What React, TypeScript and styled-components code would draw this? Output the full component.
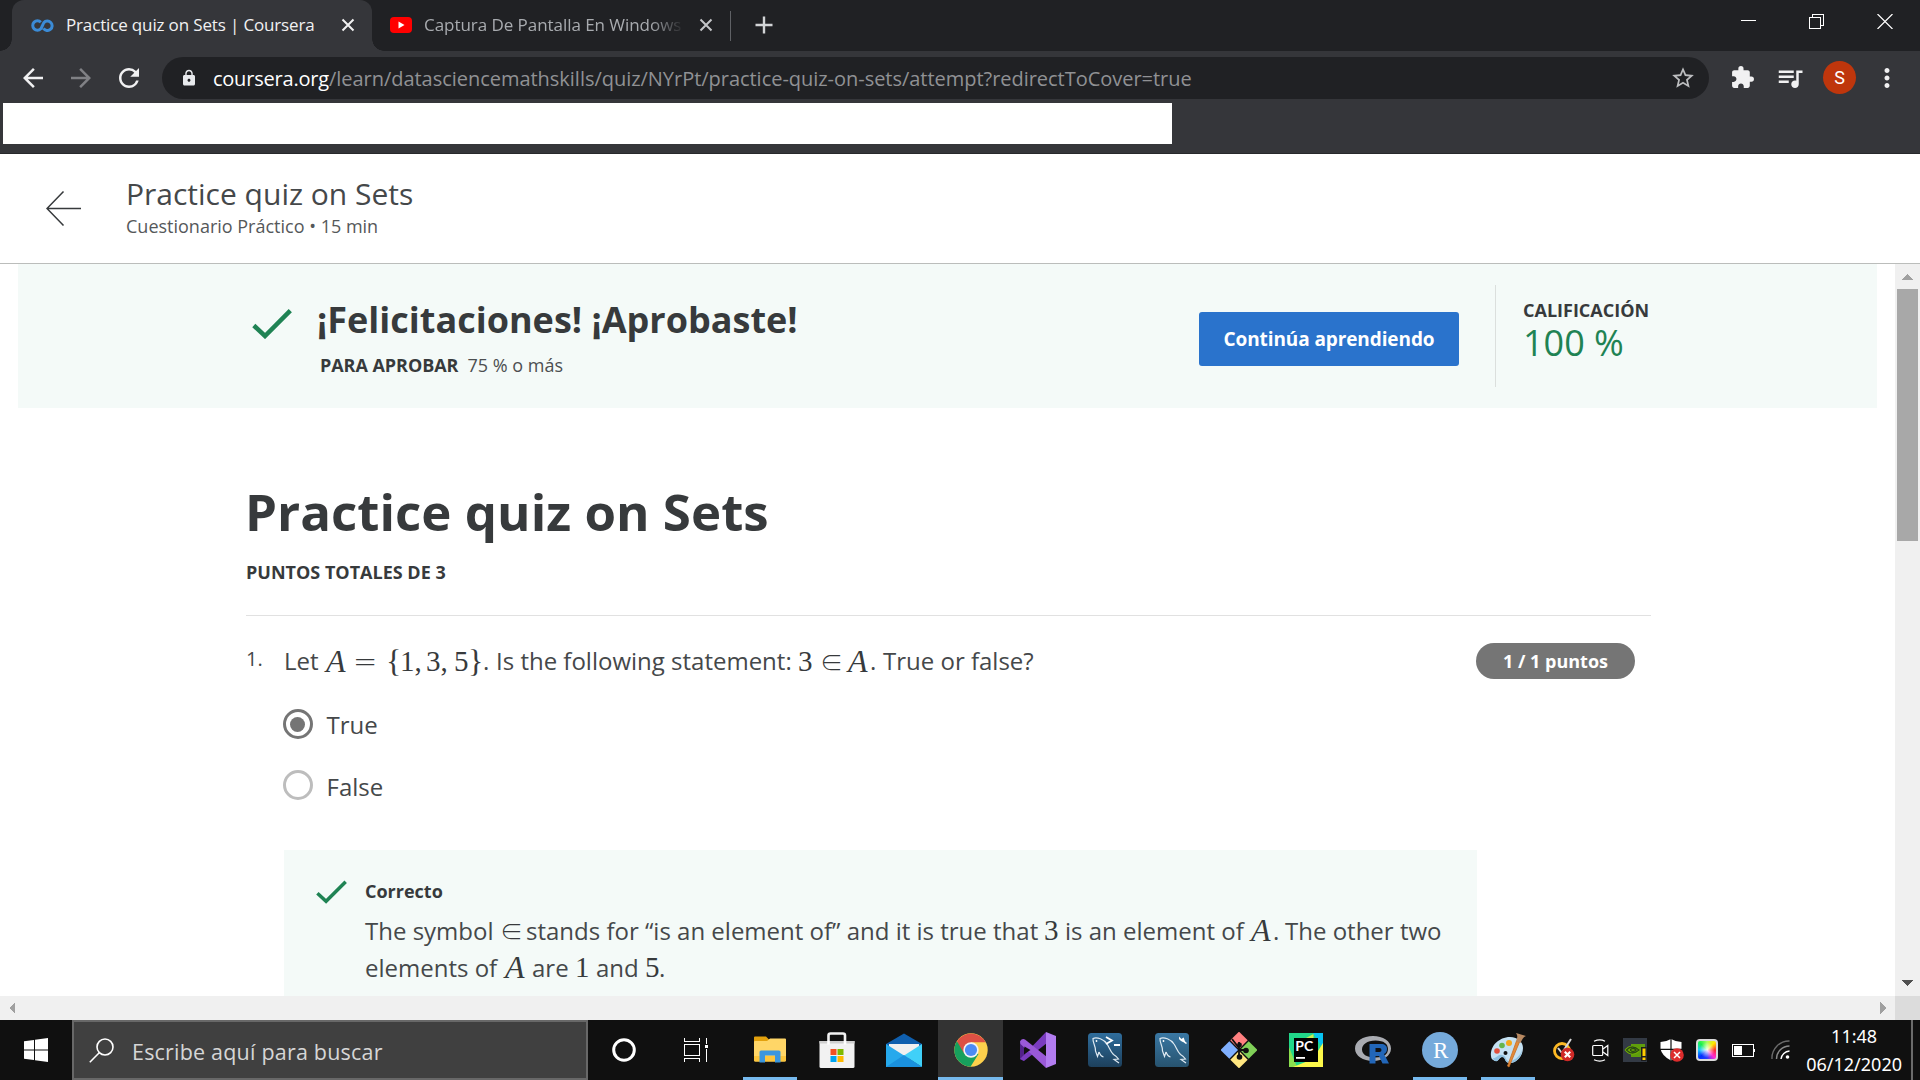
import React from 'react';
import styled, { createGlobalStyle, css } from 'styled-components';
import {
  MdArrowBack,
  MdArrowForward,
  MdRefresh,
  MdLock,
  MdStarBorder,
  MdExtension,
  MdQueueMusic,
  MdMoreVert,
} from 'react-icons/md';

const ui = `"Open Sans", "Noto Sans", sans-serif`;
const winUi = `"Noto Sans", "Open Sans", sans-serif`;

const Global = createGlobalStyle`
  * { box-sizing: border-box; }
  html, body { margin: 0; padding: 0; overflow: hidden; background: #fff; }
  svg { display: block; flex: none; }
`;

const Screen = styled.div`
  width: 1920px;
  height: 1080px;
  display: flex;
  flex-direction: column;
  overflow: hidden;
  font-family: ${ui};
  color: #45484a;
`;

/* ---------- text ---------- */

const Text = styled.span<{ $size: number; $lh: number; $w?: number; $ls?: number; $c?: string; $win?: boolean }>`
  display: block;
  white-space: nowrap;
  font-size: ${(p) => p.$size}px;
  line-height: ${(p) => p.$lh}px;
  font-weight: ${(p) => p.$w ?? 400};
  letter-spacing: ${(p) => p.$ls ?? 0}px;
  color: ${(p) => p.$c ?? (p.$w ? '#373a3c' : '#45484a')};
  ${(p) => p.$win && css`font-family: ${winUi};`}
`;

/* ---------- browser chrome ---------- */

const TabStrip = styled.div`
  height: 51px;
  background: #202124;
  display: flex;
  padding-left: 12px;
  flex: none;
`;

const Tab = styled.div<{ $active?: boolean; $width: number }>`
  position: relative;
  width: ${(p) => p.$width}px;
  height: 51px;
  padding: 0 0 1px 18px;
  display: flex;
  align-items: center;
  gap: 12px;
  ${(p) =>
    p.$active &&
    css`
      background: #35363a;
      border-radius: 12px 12px 0 0;
      &::before,
      &::after {
        content: '';
        position: absolute;
        bottom: 0;
        width: 12px;
        height: 12px;
      }
      &::before {
        left: -12px;
        background: radial-gradient(circle at 0 0, transparent 11.5px, #35363a 12px);
      }
      &::after {
        right: -12px;
        background: radial-gradient(circle at 100% 0, transparent 11.5px, #35363a 12px);
      }
    `}
`;

const TabTitle = styled.div<{ $width: number; $fade?: boolean }>`
  width: ${(p) => p.$width}px;
  overflow: hidden;
  ${(p) => p.$fade && css`mask-image: linear-gradient(90deg, #000 86%, transparent 99%);`}
`;

const TabDivider = styled.div`
  width: 1px;
  height: 30px;
  margin: 11px 24px 0 0;
  background: #5f6165;
`;

const NewTab = styled.div`
  display: flex;
  align-items: center;
  flex: 1;
  padding-bottom: 1px;
`;

const WindowButtons = styled.div`
  display: flex;
  gap: 53px;
  padding: 14px 27px 0 0;
`;

const Toolbar = styled.div`
  height: 51px;
  background: #35363a;
  display: flex;
  align-items: center;
  padding: 2px 18px 0 18px;
  flex: none;
`;

const NavButtons = styled.div`
  display: flex;
  gap: 18px;
  width: 144px;
`;

const Omnibox = styled.div`
  width: 1548px;
  height: 42px;
  border-radius: 21px;
  background: #202124;
  display: flex;
  align-items: center;
  padding: 0 13px 0 18px;
  margin-top: 1px;
`;

const Url = styled.div`
  display: flex;
  flex: 1;
  padding-top: 1px;
  margin-left: 15px;
`;

const Actions = styled.div`
  display: flex;
  align-items: center;
  flex: 1;
  padding-left: 21px;
`;

const PlaylistButton = styled.div`
  margin-left: 20px;
`;

const Avatar = styled.div`
  width: 33px;
  height: 33px;
  border-radius: 50%;
  background: #bf360c;
  color: #fff;
  font: 400 18px/33px Roboto, sans-serif;
  text-align: center;
  margin: 0 16px 0 18px;
`;

const BookmarkBar = styled.div`
  height: 52px;
  flex: none;
  background: #35363a;
  border-bottom: 1px solid #27282b;
  padding: 1px 0 0 3px;
`;

const BlankStrip = styled.div`
  width: 1169px;
  height: 41px;
  background: #fff;
`;

/* ---------- page ---------- */

const PageHeader = styled.header`
  height: 110px;
  flex: none;
  background: #fff;
  border-bottom: 1px solid #bbbdbb;
  display: flex;
  padding: 20px 0 0 46px;
`;

const BackLink = styled.div`
  width: 80px;
  padding-top: 17px;
`;

const Viewport = styled.div`
  height: 732px;
  flex: none;
  display: flex;
`;

const Content = styled.main`
  width: 1895px;
  height: 732px;
  overflow: hidden;
  background: #fff;
`;

const Banner = styled.section`
  margin: 0 18px;
  height: 144px;
  background: #f4faf8;
  display: flex;
`;

const BannerCheck = styled.div`
  width: 65px;
  margin-left: 234px;
  padding-top: 45px;
`;

const BannerCopy = styled.div`
  width: 882px;
  padding-top: 32px;
`;

const BannerSub = styled.div`
  display: flex;
  gap: 9px;
  margin: 9px 0 0 3px;
`;

const ContinueButton = styled.div`
  width: 260px;
  height: 54px;
  margin-top: 48px;
  border-radius: 3px;
  background: #2a73cc;
  display: flex;
  align-items: center;
  justify-content: center;
`;

const Grade = styled.div`
  margin: 21px 0 0 36px;
  height: 102px;
  border-left: 1px solid #dbdfdd;
  padding: 13px 0 0 27px;
`;

const Quiz = styled.section`
  margin: 71px 0 0 246px;
  width: 1405px;
`;

const QuizTitle = styled.div`
  margin-left: -1px;
`;

const Total = styled.div`
  padding: 17px 0 31px;
  border-bottom: 1px solid #e1e1e1;
`;

const Question = styled.div`
  display: flex;
  padding-top: 27px;
`;

const Ordinal = styled.div`
  width: 38px;
  padding-top: 2px;
`;

const QuestionBody = styled.div`
  width: 1192px;
`;

const Points = styled.div`
  width: 159px;
  height: 36px;
  border-radius: 18px;
  background: #757575;
  display: flex;
  align-items: center;
  justify-content: center;
`;

const Line = styled.p<{ $lh: number }>`
  margin: 0;
  height: ${(p) => p.$lh}px;
  display: flex;
  white-space: pre;
  font-size: 24px;
  line-height: ${(p) => p.$lh}px;
`;

const Run = styled.span<{ $width: number }>`
  width: ${(p) => p.$width}px;
`;

const Sym = styled.span<{ $width: number; $size?: number; $italic?: boolean }>`
  width: ${(p) => p.$width}px;
  font-family: "Liberation Serif", "DejaVu Serif", serif;
  font-size: ${(p) => p.$size ?? 29}px;
  font-style: ${(p) => (p.$italic ? 'italic' : 'normal')};
  color: #373a3c;
`;

const Rel = styled.span<{ $width: number; $size: number; $family: string; $shift?: number }>`
  width: ${(p) => p.$width}px;
  font-family: ${(p) => p.$family}, sans-serif;
  font-weight: 200;
  font-size: ${(p) => p.$size}px;
  margin-left: ${(p) => p.$shift ?? 0}px;
  color: #373a3c;
`;

const Options = styled.div`
  display: flex;
  flex-direction: column;
  gap: 26px;
  padding-top: 28px;
`;

const Option = styled.div`
  display: flex;
  height: 36px;
  gap: 14px;
  margin-left: -1.5px;
`;

const Radio = styled.div<{ $on?: boolean }>`
  width: 30px;
  height: 30px;
  margin-top: ${(p) => (p.$on ? 2 : 1)}px;
  border-radius: 50%;
  border: 3px solid ${(p) => (p.$on ? '#757575' : '#bdbdbd')};
  display: flex;
  align-items: center;
  justify-content: center;
  &::after {
    content: '';
    width: 15px;
    height: 15px;
    border-radius: 50%;
    background: ${(p) => (p.$on ? '#757575' : 'transparent')};
  }
`;

const Feedback = styled.div`
  margin: 45px -1px 0 0;
  height: 260px;
  background: #f4faf8;
  display: flex;
  padding: 29px 0 0 32px;
`;

const FeedbackIcon = styled.div`
  width: 49px;
  padding-top: 1px;
`;

const Reason = styled.div`
  padding-top: 9px;
`;

/* ---------- scroll bars ---------- */

const VScroll = styled.div`
  width: 25px;
  background: #f0f0f0;
  display: flex;
  flex-direction: column;
  align-items: center;
`;

const Thumb = styled.div`
  width: 21px;
  height: 252px;
  background: #a8a8a8;
`;

const ArrowSlot = styled.div<{ $push?: boolean }>`
  height: 25px;
  display: flex;
  align-items: center;
  padding: ${(p) => (p.$push ? '0 1px 2px 0' : '1px 1px 0 0')};
  ${(p) => p.$push && css`margin-top: auto;`}
`;

const HScroll = styled.div`
  height: 24px;
  flex: none;
  background: #f0f0f0;
  display: flex;
  align-items: center;
  padding-left: 9px;
`;

const HSpace = styled.div`
  flex: 1;
`;

const Corner = styled.div`
  width: 25px;
  height: 24px;
  background: #dcdcdc;
  margin-left: 9px;
`;

/* ---------- task bar ---------- */

const Taskbar = styled.footer`
  height: 60px;
  flex: none;
  background: #101010;
  display: flex;
`;

const Start = styled.div`
  width: 72px;
  display: flex;
  align-items: center;
  padding-left: 24px;
`;

const Search = styled.div`
  width: 516px;
  height: 60px;
  border: 2px solid #686868;
  background: #404040;
  display: flex;
  align-items: center;
  padding-left: 15px;
  gap: 18px;
`;

const SearchHint = styled.div`
  padding-top: 3px;
`;

const Launcher = styled.div<{ $state?: 'open' | 'active'; $width?: number; $after?: number }>`
  width: ${(p) => p.$width ?? 67.1}px;
  margin-right: ${(p) => p.$after ?? 0}px;
  height: 60px;
  flex: none;
  display: flex;
  align-items: center;
  justify-content: center;
  background: linear-gradient(#76b9ed, #76b9ed) center bottom / ${(p) => (p.$state === 'open' ? '54px' : '65px')}
    ${(p) => (p.$state ? '3px' : '0')} no-repeat
    ${(p) =>
      p.$state === 'active' && css`, linear-gradient(#333, #333) center / 65px 60px no-repeat`};
`;

const Tray = styled.div`
  display: flex;
  align-items: center;
  flex: 1;
  padding-left: 11px;
`;

const TrayItem = styled.div<{ $width: number }>`
  width: ${(p) => p.$width}px;
  display: flex;
`;

const Clock = styled.div`
  width: 100px;
  margin-left: 4px;
  display: flex;
  flex-direction: column;
  align-items: center;
  gap: 4px;
  padding-bottom: 1px;
`;

const PeekEdge = styled.div`
  width: 2px;
  height: 60px;
  background: #6b6b6b;
  margin-left: 7px;
`;

/* ---------- drawings ---------- */

const Infinity = () => (
  <svg width="24" height="13" viewBox="0 0 24 13" fill="none" stroke="#3b8bd6" strokeWidth="3">
    <path d="M10.800 3.200A4.700 4.700 0 1 0 10.800 9.800C12 8.600 12.400 6 13.800 3.800A4.700 4.700 0 1 1 13.500 9.400" />
  </svg>
);

const Cross = ({ color }: { color: string }) => (
  <svg width="14" height="14" viewBox="0 0 14 14" stroke={color} strokeWidth="2">
    <path d="M1.500 1.500L12.500 12.500M12.500 1.500L1.500 12.500" />
  </svg>
);

const Check = ({ w, h }: { w: number; h: number }) => (
  <svg width={w} height={h} viewBox="0 0 40 30" fill="none" stroke="#1f8354" strokeWidth="4.500">
    <path d="M1.800 16.500L13 27L38.300 1.700" />
  </svg>
);

const YouTube = () => (
  <svg width="22" height="16" viewBox="0 0 22 16">
    <rect width="22" height="16" rx="4" fill="#f00" />
    <path d="M8.500 4.500L14.500 8L8.500 11.500Z" fill="#fff" />
  </svg>
);

const Triangle = ({ d, w, h, c }: { d: string; w: number; h: number; c: string }) => (
  <svg width={w} height={h} shapeRendering="crispEdges">
    <path d={d} fill={c} />
  </svg>
);

const Explorer = () => (
  <svg width="32" height="28" viewBox="0 0 32 28">
    <path d="M0 1.500Q0 0.500 1 0.500H12L15 3.500H31Q32 3.500 32 4.500V10H0Z" fill="#e3a10d" />
    <path d="M0 6Q0 5 1 5H13L16 2.500H31Q32 2.500 32 3.500V24Q32 25.500 30.500 25.500H1.500Q0 25.500 0 24Z" fill="#ffd667" />
    <path d="M0 20H32V24Q32 25.500 30.500 25.500H1.500Q0 25.500 0 24Z" fill="#fcc53b" />
    <path d="M5.500 26.500V16Q5.500 14.500 7 14.500H25Q26.500 14.500 26.500 16V26.500H21V19.500H11V26.500Z" fill="#3a96dd" />
  </svg>
);

const Store = () => (
  <svg width="36" height="36" viewBox="0 0 36 36">
    <path d="M9.500 13V3.500Q9.500 1.500 11.500 1.500H24Q26 1.500 26 3.500V13" fill="none" stroke="#f2f2f2" strokeWidth="2.600" />
    <path d="M0.500 9H35.500V34.500Q35.500 36 34 36H2Q0.500 36 0.500 34.500Z" fill="#f2f2f2" />
    <path d="M0.500 9H35.500V11.500H0.500Z" fill="#cfcfcf" />
    <path d="M8.200 9H10.800V12.500H8.200ZM24.700 9H27.300V12.500H24.700Z" fill="#fff" />
    <path d="M11.500 17H17.500V23H11.500Z" fill="#f25022" />
    <path d="M18.500 17H24.500V23H18.500Z" fill="#7fba00" />
    <path d="M11.500 24H17.500V30H11.500Z" fill="#00a4ef" />
    <path d="M18.500 24H24.500V30H18.500Z" fill="#ffb900" />
  </svg>
);

const Mail = () => (
  <svg width="36" height="34" viewBox="0 0 36 34">
    <path d="M0 11L18 0.500L36 11V20H0Z" fill="#0f5fae" />
    <path d="M3 11H33V20L18 28L3 20Z" fill="#f0f0f0" />
    <path d="M0 11L18 22.500L36 34H0Z" fill="#26a9ec" />
    <path d="M36 11L18 22.500L36 34Z" fill="#40d0f8" />
    <path d="M0 34L18 22L36 34Z" fill="#1a91de" />
  </svg>
);

const ChromeLogo = () => (
  <svg width="34" height="34" viewBox="0 0 34 34">
    <circle cx="17" cy="17" r="16.700" fill="#fdd04c" />
    <path d="M17 17L2.600 8.500A16.700 16.700 0 0 0 16.500 33.700L24.500 21Z" fill="#17a05d" />
    <path d="M3 8.200L9.500 19.500L17 17V9.200H31.600A16.700 16.700 0 0 0 3 8.200Z" fill="#dd5044" />
    <circle cx="17" cy="17" r="7.700" fill="#f3f3f3" />
    <circle cx="17" cy="17" r="6.100" fill="#4c8bf5" />
  </svg>
);

const VisualStudio = () => (
  <svg width="36" height="36" viewBox="0 0 36 36">
    <path d="M0 9L4 7V29L0 27Z" fill="#52218a" />
    <path d="M0 27L26 0L27 11L4 29Z" fill="#7a3cc0" />
    <path d="M0 9.500Q2 6 5 7.500L27 25L26 36L0.500 12Z" fill="#9a59d8" />
    <path d="M26 0L36 4V32L26 36Z" fill="#b27cf0" />
    <path d="M4.500 14.500L10.500 18L4.500 22Z" fill="#101010" />
  </svg>
);

const Dolphin = ({ tool }: { tool?: boolean }) => (
  <svg width="34" height="34" viewBox="0 0 34 34">
    <defs>
      <linearGradient id={tool ? 'seaTool' : 'sea'} x1="0" y1="0" x2="0" y2="1">
        <stop offset="0" stopColor={tool ? '#3a78a4' : '#2f6d9c'} />
        <stop offset="1" stopColor={tool ? '#27536f' : '#1d405c'} />
      </linearGradient>
    </defs>
    <rect width="34" height="34" rx="3.500" fill={tool ? 'url(#seaTool)' : 'url(#sea)'} />
    <g fill="none" stroke="#dfeaf2" strokeWidth="1.200">
      <path d="M11 19L9.500 23.500L7.500 18C8 13 4.500 10 5 5.500C9 3.500 16 6.500 19 11C21.500 14.500 22 18 25.500 21.500C28 23 29.500 24.500 30.500 26L26 26.500L31 30" />
      <path d="M11 19C12 21.500 13.500 23.500 15.500 24" />
    </g>
    <circle cx="8.500" cy="8" r="0.900" fill="#fff" />
    {tool ? (
      <path d="M24 3.500L26.500 6L28.500 4.500C30 7 29 8 32 10L31 11C28 8.500 26.500 9 24 6Z" fill="#fff" />
    ) : (
      <path d="M18 4L24 7.500L18 11M26 12H32" fill="none" stroke="#fff" strokeWidth="1.800" />
    )}
  </svg>
);

const GitBash = () => (
  <svg width="36" height="36" viewBox="0 0 36 36">
    <g transform="rotate(45 18 18)">
      <rect x="5" y="5" width="12.300" height="12.300" fill="#ff8080" />
      <rect x="18.700" y="5" width="12.300" height="12.300" fill="#80d058" />
      <rect x="5" y="18.700" width="12.300" height="12.300" fill="#80b0ff" />
      <rect x="18.700" y="18.700" width="12.300" height="12.300" fill="#ffe680" />
    </g>
    <path d="M11 7L18 16M18 10V24M18 18L25 18" stroke="#101010" strokeWidth="1.800" fill="none" />
    <circle cx="18.500" cy="13" r="2.400" fill="#101010" />
    <circle cx="18.500" cy="25" r="2.800" fill="#101010" />
    <circle cx="25" cy="18.500" r="2.800" fill="#101010" />
  </svg>
);

const PyCharm = () => (
  <svg width="34" height="34" viewBox="0 0 34 34">
    <rect width="34" height="34" fill="#21d789" />
    <path d="M0 14L8 34H0Z" fill="#8be04e" />
    <path d="M24 0H34V16Z" fill="#07c3f2" />
    <path d="M34 10V34H4L24 26Z" fill="#fcf84a" />
    <path d="M17 5L24.500 1V5Z" fill="#c8ee55" />
    <rect x="5" y="5" width="24" height="24" fill="#000" />
    <text x="6.300" y="17.800" fontFamily="Lato, sans-serif" fontWeight="700" fontSize="14" fill="#fff">PC</text>
    <rect x="7" y="24" width="9" height="1.800" fill="#fff" />
  </svg>
);

const RLogo = () => (
  <svg width="36" height="28" viewBox="0 0 36 28">
    <path
      fillRule="evenodd"
      fill="#a9abb1"
      d="M18 0C28 0 36 5 36 12.500S28 25 18 25S0 20 0 12.500S8 0 18 0ZM20.500 4.500C12 4.500 7 8.500 7 13.500S12 21.500 20.500 21.500S33 18 33 13S29 4.500 20.500 4.500Z"
    />
    <path fillRule="evenodd" fill="#2266b8" d="M14.500 8H26C30 8 32 10 32 13C32 15.500 31 17 29 18L34 27.500H27.500L24 20H20.500V27.500H14.500ZM20.500 12V16H24.500Q26.500 16 26.500 14T24.500 12Z" />
  </svg>
);

const RStudio = () => (
  <svg width="36" height="36" viewBox="0 0 36 36">
    <circle cx="18" cy="18" r="18" fill="#75aadb" />
    <text x="11" y="25.500" fontFamily="Liberation Serif, serif" fontSize="23" fill="#fff">R</text>
  </svg>
);

const Paint = () => (
  <svg width="36" height="36" viewBox="0 0 36 36">
    <path d="M1 24C0 14 9 5 20 5C28 5 33 10 33 16C33 25 25 32 19 31C14 30 16 25 12 25C9 25 9 30 5 29C2 28 1 26 1 24Z" fill="#c5e1f3" />
    <path d="M3 26C6 27 8 22 12 23C17 24 15 29 19 29C26 29 31 22 32 18C32 26 24 32 19 31C14 30 16 25 12 25C9 25 9 30 5 29C4 28.500 3 27 3 26Z" fill="#8fc0e0" />
    <circle cx="7" cy="19" r="2.800" fill="#e2503c" />
    <circle cx="12" cy="13.500" r="2.800" fill="#66b54d" />
    <circle cx="19" cy="11" r="3" fill="#f5a81c" />
    <circle cx="15.500" cy="21" r="2" fill="#101010" />
    <path d="M29.500 10L19 35L17.500 34L26.500 9Z" fill="#e38a3a" stroke="#c56d22" strokeWidth="0.800" />
    <path d="M26 1L36 4C33 5 32 8 30.500 11L26 9C27.500 6 28 3.500 26 1Z" fill="#b98a62" />
  </svg>
);

const Norton = () => (
  <svg width="24" height="24" viewBox="0 0 24 24">
    <circle cx="10" cy="13" r="7.500" fill="none" stroke="#fdb924" strokeWidth="2.800" />
    <path d="M6 10L10 15L19 1" fill="none" stroke="#d8d8d8" strokeWidth="2" />
    <circle cx="15.500" cy="16.500" r="6.800" fill="#cf2a27" />
    <path d="M12.800 13.800L18.200 19.200M18.200 13.800L12.800 19.200" stroke="#fff" strokeWidth="2.200" />
  </svg>
);

const MeetNow = () => (
  <svg width="17" height="23" viewBox="0 0 17 23" fill="none" stroke="#fff" strokeWidth="1.200">
    <rect x="0.700" y="6.500" width="10" height="10" rx="1" />
    <path d="M11 10L15.800 6.500V16.500L11 13M2 2.200Q8 -0.500 13 2.200M2 20.800Q8 23.500 13 20.800" />
  </svg>
);

const Nvidia = () => (
  <svg width="24" height="24" viewBox="0 0 24 24">
    <rect width="24" height="24" fill="#333a45" />
    <path d="M8 6H22V19H8Z" fill="#5f9e0c" />
    <path d="M1.500 12Q8 3.500 18 12Q9 21 1.500 12Z" fill="#76b900" />
    <path d="M3.500 12Q9 6 16 12Q9 18 3.500 12ZM7 12Q10 9 13 12Q10 15 7 12" fill="none" stroke="#2b4a16" strokeWidth="1.300" />
    <rect x="18" y="9" width="5.500" height="14" fill="#1d1d1d" />
    <path d="M19.500 10.500H22.500V18H19.500ZM19.500 19.500H22.500V22H19.500Z" fill="#ffcc00" />
  </svg>
);

const Defender = () => (
  <svg width="24" height="24" viewBox="0 0 24 24">
    <path d="M0.500 4Q7 3.500 11 1Q15 3.500 21.500 4V11Q20 18 11 22.500Q2 18 0.500 11Z" fill="#fff" />
    <path d="M11 1V22.500M0 11.300H22" stroke="#101010" strokeWidth="1.200" />
    <circle cx="17" cy="17" r="6.800" fill="#dd2c2c" />
    <path d="M14 14L20 20M20 14L14 20" stroke="#fff" strokeWidth="1.500" />
  </svg>
);

const ColorWheel = styled.div`
  width: 22px;
  height: 22px;
  border-radius: 4px;
  border: 2px solid #d9d9d9;
  background: radial-gradient(circle, rgba(255, 255, 255, 0.95) 0, rgba(255, 255, 255, 0) 60%),
    conic-gradient(#a8ff60, #ffe900, #ff2a2a, #ff2bd0, #2b3cff, #0030ff, #12c9ff, #19f04a, #a8ff60);
`;

const Battery = () => (
  <svg width="23" height="13" viewBox="0 0 23 13" shapeRendering="crispEdges">
    <rect x="0.500" y="0.500" width="21" height="12" fill="none" stroke="#fff" />
    <rect x="2" y="2" width="8" height="9" fill="#fff" />
    <rect x="22" y="5" width="1" height="3" fill="#fff" />
  </svg>
);

const Wifi = () => (
  <svg width="20" height="20" viewBox="0 0 20 20" fill="none" strokeWidth="1.400">
    <path d="M1 19A17 17 0 0 1 18.500 1" stroke="#6b6b6b" />
    <path d="M5.500 19A13 13 0 0 1 18.500 6" stroke="#8a8a8a" />
    <path d="M10 19A9 9 0 0 1 18.500 11" stroke="#fff" />
    <circle cx="16.500" cy="17" r="1.800" fill="#fff" />
  </svg>
);

const launchers: { icon: React.ReactNode; state?: 'open' | 'active' }[] = [
  { icon: <Explorer />, state: 'open' },
  { icon: <Store /> },
  { icon: <Mail /> },
  { icon: <ChromeLogo />, state: 'active' },
  { icon: <VisualStudio /> },
  { icon: <Dolphin /> },
  { icon: <Dolphin tool /> },
  { icon: <GitBash /> },
  { icon: <PyCharm /> },
  { icon: <RLogo /> },
  { icon: <RStudio />, state: 'open' },
  { icon: <Paint />, state: 'open' },
];

const ElementOf = ({ width }: { width: number }) => (
  <Rel $width={width} $size={23} $shift={-2} $family={'"Noto Sans CJK JP"'}>∈</Rel>
);

export default function App() {
  return (
    <Screen>
      <Global />
      <TabStrip>
        <Tab $active $width={360}>
          <Infinity />
          <TabTitle $width={263}>
            <Text $size={17} $lh={24} $c="#f1f1f2" $ls={-0.15}>Practice quiz on Sets | Coursera</Text>
          </TabTitle>
          <Cross color="#f1f1f2" />
        </Tab>
        <Tab $width={358}>
          <YouTube />
          <TabTitle $width={263} $fade>
            <Text $size={17} $lh={24} $c="#a8abaf" $ls={-0.05}>Captura De Pantalla En Windows</Text>
          </TabTitle>
          <Cross color="#c3c5c8" />
        </Tab>
        <TabDivider />
        <NewTab>
          <svg width="18" height="18" viewBox="0 0 18 18" stroke="#d2d4d6" strokeWidth="2.400">
            <path d="M9 0.500V17.500M0.500 9H17.500" />
          </svg>
        </NewTab>
        <WindowButtons>
          <svg width="15" height="15" shapeRendering="crispEdges">
            <path d="M0 6.500H15" stroke="#fff" />
          </svg>
          <svg width="15" height="15" shapeRendering="crispEdges" fill="none" stroke="#fff">
            <path d="M0.500 3.500H11.500V14.500H0.500ZM3.500 3V0.500H14.500V11.500H12" />
          </svg>
          <svg width="16" height="15" stroke="#fff" strokeWidth="1.200">
            <path d="M0.500 0L15.500 15M15.500 0L0.500 15" />
          </svg>
        </WindowButtons>
      </TabStrip>
      <Toolbar>
        <NavButtons>
          <MdArrowBack size={30} color="#f1f1f2" />
          <MdArrowForward size={30} color="#808185" />
          <MdRefresh size={30} color="#f1f1f2" />
        </NavButtons>
        <Omnibox>
          <MdLock size={18} color="#e8eaed" />
          <Url>
            <Text $size={20} $lh={28} $c="#fff" $ls={-0.2}>coursera.org</Text>
            <Text $size={20} $lh={28} $c="#909194" $ls={-0.03}>
              /learn/datasciencemathskills/quiz/NYrPt/practice-quiz-on-sets/attempt?redirectToCover=true
            </Text>
          </Url>
          <MdStarBorder size={26} color="#bdbec0" />
        </Omnibox>
        <Actions>
          <MdExtension size={25} color="#f1f1f2" />
          <PlaylistButton>
            <MdQueueMusic size={30} color="#f1f1f2" />
          </PlaylistButton>
          <Avatar>S</Avatar>
          <MdMoreVert size={30} color="#f1f1f2" />
        </Actions>
      </Toolbar>
      <BookmarkBar>
        <BlankStrip />
      </BookmarkBar>

      <PageHeader>
        <BackLink>
          <svg width="36" height="35" fill="none" stroke="#373a3c" strokeWidth="1.500">
            <path d="M17.500 0.500L1 17.500L17.500 34.500M1 17.500H35" />
          </svg>
        </BackLink>
        <div>
          <Text $size={30} $lh={39}>Practice quiz on Sets</Text>
          <Text $size={18} $lh={26} $c="#55585a">Cuestionario Práctico • 15 min</Text>
        </div>
      </PageHeader>

      <Viewport>
        <Content>
          <Banner>
            <BannerCheck>
              <Check w={40} h={30} />
            </BannerCheck>
            <BannerCopy>
              <Text $size={36} $lh={48} $w={700}>¡Felicitaciones! ¡Aprobaste!</Text>
              <BannerSub>
                <Text $size={18} $lh={24} $w={700} $ls={-0.05}>PARA APROBAR</Text>
                <Text $size={18} $lh={24} $c="#4c4f51">75 % o más</Text>
              </BannerSub>
            </BannerCopy>
            <ContinueButton>
              <Text $size={19} $lh={28} $w={700} $c="#fff" $ls={-0.1}>Continúa aprendiendo</Text>
            </ContinueButton>
            <Grade>
              <Text $size={18} $lh={24} $w={700}>CALIFICACIÓN</Text>
              <Text $size={36} $lh={42} $c="#1f8354">100 %</Text>
            </Grade>
          </Banner>

          <Quiz>
            <QuizTitle>
              <Text $size={51} $lh={64} $w={700} $ls={0.03}>Practice quiz on Sets</Text>
            </QuizTitle>
            <Total>
              <Text $size={18} $lh={24} $w={700}>PUNTOS TOTALES DE 3</Text>
            </Total>
            <Question>
              <Ordinal>
                <Text $size={20} $lh={28}>1.</Text>
              </Ordinal>
              <QuestionBody>
                <Line $lh={36}>
                  <Run $width={42}>Let</Run>
                  <Sym $width={27} $size={32} $italic>A</Sym>
                  <Rel $width={33} $size={29} $family={'"DejaVu Sans Light", "DejaVu Sans"'}>=</Rel>
                  <Sym $width={14} $size={32}>{'{'}</Sym>
                  <Sym $width={26}>1,</Sym>
                  <Sym $width={28}>3,</Sym>
                  <Sym $width={14}>5</Sym>
                  <Sym $width={15} $size={32}>{'}'}</Sym>
                  <Run $width={13}>.</Run>
                  <Run $width={302}>Is the following statement:</Run>
                  <Sym $width={24}>3</Sym>
                  <ElementOf width={28} />
                  <Sym $width={22} $size={32} $italic>A</Sym>
                  <Run $width={13}>.</Run>
                  <Run $width={170}>True or false?</Run>
                </Line>
                <Options>
                  <Option>
                    <Radio $on />
                    <Text $size={24} $lh={36}>True</Text>
                  </Option>
                  <Option>
                    <Radio />
                    <Text $size={24} $lh={36}>False</Text>
                  </Option>
                </Options>
                <Feedback>
                  <FeedbackIcon>
                    <Check w={31} h={24} />
                  </FeedbackIcon>
                  <div>
                    <Text $size={18} $lh={24} $w={700}>Correcto</Text>
                    <Reason>
                      <Line $lh={37}>
                        <Run $width={137}>The symbol</Run>
                        <ElementOf width={26} />
                        <Run $width={518}>stands for “is an element of” and it is true that</Run>
                        <Sym $width={21}>3</Sym>
                        <Run $width={186}>is an element of</Run>
                        <Sym $width={22} $size={32} $italic>A</Sym>
                        <Run $width={12}>.</Run>
                        <Run $width={160}>The other two</Run>
                      </Line>
                      <Line $lh={37}>
                        <Run $width={140}>elements of</Run>
                        <Sym $width={27} $size={32} $italic>A</Sym>
                        <Run $width={43}>are</Run>
                        <Sym $width={21}>1</Sym>
                        <Run $width={49}>and</Run>
                        <Sym $width={14}>5</Sym>
                        <Run $width={12}>.</Run>
                      </Line>
                    </Reason>
                  </div>
                </Feedback>
              </QuestionBody>
              <Points>
                <Text $size={18} $lh={24} $w={700} $c="#fff">1 / 1 puntos</Text>
              </Points>
            </Question>
          </Quiz>
        </Content>
        <VScroll>
          <ArrowSlot>
            <Triangle w={12} h={6} d="M6 0L12 6H0Z" c="#a0a0a0" />
          </ArrowSlot>
          <Thumb />
          <ArrowSlot $push>
            <Triangle w={12} h={6} d="M0 0H12L6 6Z" c="#505050" />
          </ArrowSlot>
        </VScroll>
      </Viewport>
      <HScroll>
        <Triangle w={6} h={12} d="M6 0V12L0 6Z" c="#a0a0a0" />
        <HSpace />
        <Triangle w={6} h={12} d="M0 0V12L6 6Z" c="#a0a0a0" />
        <Corner />
      </HScroll>

      <Taskbar>
        <Start>
          <svg width="24" height="24" viewBox="0 0 24 24" fill="#fff">
            <path d="M0 3.300L10 1.900V11.500H0ZM11 1.700L24 0V11.500H11ZM0 12.500H10V22.100L0 20.700ZM11 12.500H24V24L11 22.300Z" />
          </svg>
        </Start>
        <Search>
          <svg width="25" height="25" viewBox="0 0 25 25" fill="none" stroke="#fff" strokeWidth="1.600">
            <circle cx="16" cy="9" r="8" />
            <path d="M10.500 14.500L0.800 24.200" />
          </svg>
          <SearchHint>
            <Text $size={21.5} $lh={30} $c="#d6d6d6" $ls={0.2}>Escribe aquí para buscar</Text>
          </SearchHint>
        </Search>
        <Launcher $width={72}>
          <svg width="24" height="24">
            <circle cx="12" cy="12" r="10.300" fill="none" stroke="#fff" strokeWidth="3" />
          </svg>
        </Launcher>
        <Launcher $width={72} $after={4}>
          <svg width="24" height="24" fill="none" stroke="#fff" strokeWidth="1.300" shapeRendering="crispEdges">
            <path d="M0.500 0V3.500H15.500V0M0.500 6.500H15.500V17.500H0.500ZM0.500 24V20.500H15.500V24M22.500 0V6M22.500 11V24" />
            <path d="M21 7H24V10H21Z" fill="#fff" stroke="none" />
          </svg>
        </Launcher>
        {launchers.map((l, i) => (
          <Launcher key={i} $state={l.state}>
            {l.icon}
          </Launcher>
        ))}
        <Tray>
          <TrayItem $width={40}><Norton /></TrayItem>
          <TrayItem $width={31}><MeetNow /></TrayItem>
          <TrayItem $width={37}><Nvidia /></TrayItem>
          <TrayItem $width={36}><Defender /></TrayItem>
          <TrayItem $width={36}><ColorWheel /></TrayItem>
          <TrayItem $width={39}><Battery /></TrayItem>
          <TrayItem $width={29}><Wifi /></TrayItem>
          <Clock>
            <Text $size={18} $lh={24} $c="#fff" $win>11:48</Text>
            <Text $size={18} $lh={24} $c="#fff" $win>06/12/2020</Text>
          </Clock>
          <PeekEdge />
        </Tray>
      </Taskbar>
    </Screen>
  );
}
